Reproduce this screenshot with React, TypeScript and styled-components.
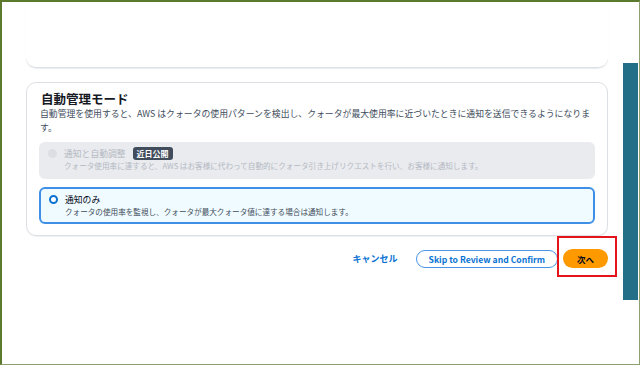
import React from 'react';
import styled, { createGlobalStyle } from 'styled-components';

const GlobalStyle = createGlobalStyle`
  html, body {
    margin: 0;
    padding: 0;
    background: #ffffff;
  }
  * {
    box-sizing: border-box;
  }
`;

const Frame = styled.div`
  display: flex;
  width: 640px;
  height: 365px;
  border-top: 2px solid #5b7a2e;
  border-left: 2px solid #5b7a2e;
  border-right: 1px solid #8fa070;
  border-bottom: 1px solid #8fa070;
  background: #ffffff;
  font-family: 'Noto Sans CJK JP', 'Noto Sans', sans-serif;
  color: #000716;
  overflow: hidden;
`;

const Main = styled.div`
  width: 606px;
  padding-left: 24px;
  display: flex;
  flex-direction: column;
`;

const Rail = styled.div`
  width: 15px;
  height: 237px;
  margin-top: 61px;
  margin-left: 15px;
  background: #246f88;
`;

const PrevCard = styled.div`
  height: 66px;
  border-radius: 0 0 10px 10px;
  border-bottom: 1px solid #dcdfe3;
  box-shadow: 0 1px 1px rgba(0, 28, 36, 0.08);
`;

const Card = styled.section`
  margin-top: 14px;
  border: 1px solid #dcdfe3;
  border-radius: 10px;
  padding: 8px 12px 11px 12px;
  box-shadow: 0 1px 1px rgba(0, 28, 36, 0.06);
`;

const Title = styled.h2`
  margin: 0 0 0 2px;
  font-size: 12.5px;
  line-height: 16px;
  font-weight: 700;
  color: #16191f;
`;

const Description = styled.p`
  margin: 0 0 7px 1px;
  font-size: 8.85px;
  line-height: 14px;
  color: #414d5c;
`;

const Options = styled.div`
  display: flex;
  flex-direction: column;
  gap: 8px;
`;

const Option = styled.label<{ $selected?: boolean; $disabled?: boolean }>`
  display: flex;
  align-items: flex-start;
  gap: 7px;
  height: 37px;
  padding: ${(p) => (p.$selected ? '4px 9px 6px 8px' : '5px 10px 7px 9px')};
  border-radius: 6px;
  border: ${(p) => (p.$selected ? '2px solid #3f8fe6' : 'none')};
  background: ${(p) => (p.$disabled ? '#eaebef' : p.$selected ? '#f0fbff' : '#ffffff')};
`;

const Radio = styled.span<{ $checked?: boolean; $disabled?: boolean }>`
  flex: none;
  width: 9px;
  height: 9px;
  margin-top: 2px;
  border-radius: 50%;
  background: ${(p) => (p.$disabled ? '#dcdee3' : '#ffffff')};
  border: ${(p) => (p.$checked ? '2.5px solid #0972d3' : p.$disabled ? 'none' : '1px solid #7d8998')};
`;

const OptionText = styled.div`
  display: flex;
  flex-direction: column;
`;

const OptionLabel = styled.div<{ $disabled?: boolean }>`
  display: flex;
  align-items: center;
  gap: 7px;
  font-size: 8.8px;
  line-height: 13px;
  color: ${(p) => (p.$disabled ? '#b3b9c2' : '#000716')};
`;

const OptionSub = styled.div<{ $disabled?: boolean }>`
  font-size: 7.6px;
  line-height: 12px;
  color: ${(p) => (p.$disabled ? '#b3b9c2' : '#414d5c')};
`;

const Badge = styled.span`
  display: inline-block;
  padding: 0 4px;
  height: 13px;
  line-height: 13px;
  border-radius: 3px;
  background: #414d5c;
  color: #ffffff;
  font-size: 8px;
  font-weight: 700;
`;

const Actions = styled.div`
  display: flex;
  justify-content: flex-end;
  align-items: center;
  margin-top: 13px;
`;

const LinkButton = styled.button`
  border: none;
  background: none;
  padding: 0;
  margin-right: 18px;
  font-family: inherit;
  font-size: 9px;
  font-weight: 700;
  color: #0972d3;
  cursor: pointer;
`;

const OutlineButton = styled.button`
  height: 18px;
  padding: 0 12px;
  border: 1.5px solid #4a95e8;
  border-radius: 10px;
  background: #ffffff;
  font-family: inherit;
  font-size: 8.6px;
  font-weight: 700;
  color: #0972d3;
  cursor: pointer;
  margin-right: 5px;
`;

const Highlight = styled.span`
  display: inline-flex;
  padding: 11px 7px 7px 4px;
  margin: -13px -9px -9px -6px;
  border: 2px solid #e5141b;
`;

const PrimaryButton = styled.button`
  height: 19px;
  width: 45px;
  padding: 0;
  border: none;
  border-radius: 10px;
  background: #ff9900;
  font-family: inherit;
  font-size: 8.5px;
  font-weight: 700;
  color: #000716;
  cursor: pointer;
`;

const App: React.FC = () => {
  const [mode, setMode] = React.useState('notify');

  return (
    <>
      <GlobalStyle />
      <Frame>
        <Main>
          <PrevCard />
          <Card>
            <Title>自動管理モード</Title>
            <Description>
              自動管理を使用すると、AWS はクォータの使用パターンを検出し、クォータが最大使用率に近づいたときに通知を送信できるようになりま
              <br />
              す。
            </Description>
            <Options>
              <Option $disabled>
                <Radio $disabled />
                <OptionText>
                  <OptionLabel $disabled>
                    通知と自動調整 <Badge>近日公開</Badge>
                  </OptionLabel>
                  <OptionSub $disabled>
                    クォータ使用率に達すると、AWS はお客様に代わって自動的にクォータ引き上げリクエストを行い、お客様に通知します。
                  </OptionSub>
                </OptionText>
              </Option>
              <Option $selected={mode === 'notify'} onClick={() => setMode('notify')}>
                <Radio $checked={mode === 'notify'} />
                <OptionText>
                  <OptionLabel>通知のみ</OptionLabel>
                  <OptionSub>
                    クォータの使用率を監視し、クォータが最大クォータ値に達する場合は通知します。
                  </OptionSub>
                </OptionText>
              </Option>
            </Options>
          </Card>
          <Actions>
            <LinkButton>キャンセル</LinkButton>
            <OutlineButton>Skip to Review and Confirm</OutlineButton>
            <Highlight>
              <PrimaryButton>次へ</PrimaryButton>
            </Highlight>
          </Actions>
        </Main>
        <Rail />
      </Frame>
    </>
  );
};

export default App;
